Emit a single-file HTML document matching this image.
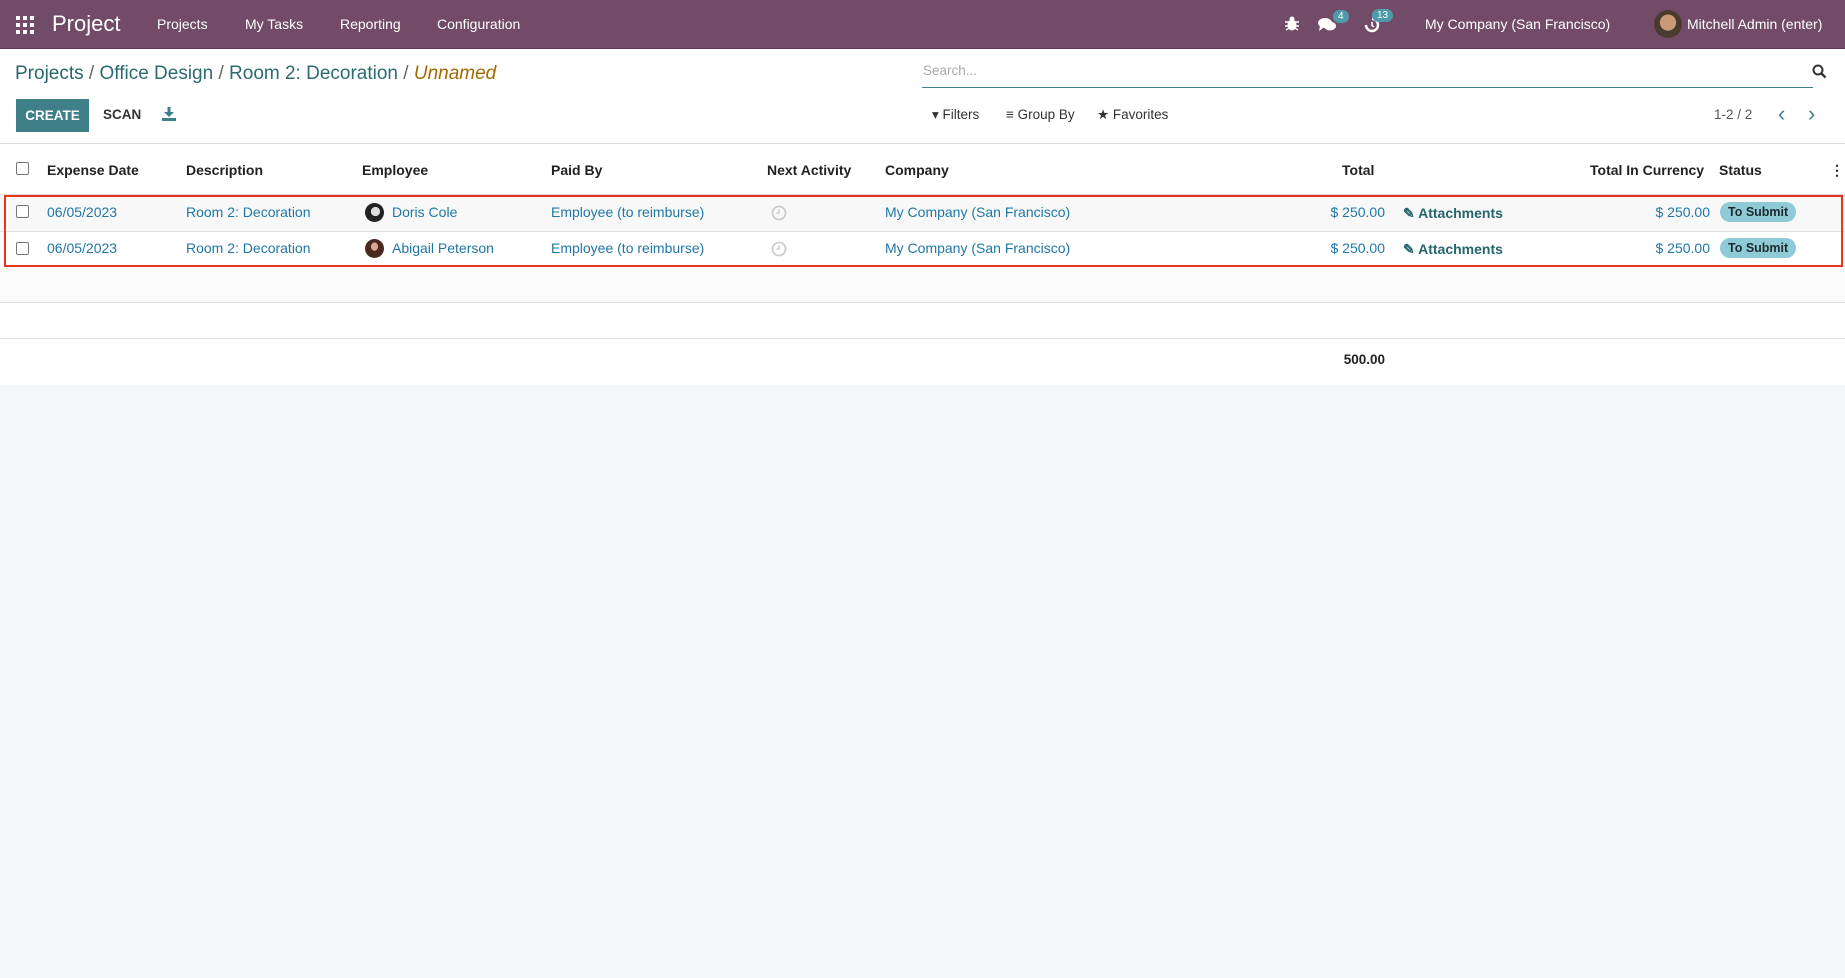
<!DOCTYPE html>
<html><head><meta charset="utf-8">
<style>
*{box-sizing:border-box;margin:0;padding:0}
body{width:1845px;height:978px;background:#f5f6fa;font-family:"Liberation Sans",Arial,sans-serif;font-size:14px;color:#4c4c4c;position:relative;overflow:hidden}
.a{position:absolute;white-space:nowrap}
.nav{position:absolute;left:0;top:0;width:1845px;height:49px;background:#714b67;border-bottom:1px solid #5a3b52}
.nav .a{color:#fff;top:16px;font-size:14px}
.main{position:absolute;left:0;top:49px;width:1845px;height:336px;background:#fff}
.lnk{color:#1f77a6}
.th{font-weight:bold;color:#222;top:162px;font-size:14px}
.cb{position:absolute;width:13px;height:13px;border:1px solid #777;border-radius:2px;background:#fff}
.badge{position:absolute;background:#4f9aa8;color:#fff;font-size:10px;border-radius:9px;padding:1px 5px}
.st{position:absolute;background:#8fcbd6;color:#1d2b2e;font-weight:bold;font-size:12.5px;border-radius:10px;padding:3px 8px}
</style></head><body>
<div class="nav">
 <svg class="a" style="left:16px;top:16px" width="18" height="18" viewBox="0 0 18 18" fill="#fff"><rect x="0" y="0" width="4" height="4"/><rect x="7" y="0" width="4" height="4"/><rect x="14" y="0" width="4" height="4"/><rect x="0" y="7" width="4" height="4"/><rect x="7" y="7" width="4" height="4"/><rect x="14" y="7" width="4" height="4"/><rect x="0" y="14" width="4" height="4"/><rect x="7" y="14" width="4" height="4"/><rect x="14" y="14" width="4" height="4"/></svg>
 <div class="a" style="left:52px;top:11px;font-size:22px">Project</div>
 <div class="a" style="left:157px">Projects</div>
 <div class="a" style="left:245px">My Tasks</div>
 <div class="a" style="left:340px">Reporting</div>
 <div class="a" style="left:437px">Configuration</div>
 <svg class="a" style="left:1285px;top:16px" width="14" height="15" viewBox="0 0 14 15" fill="#fff"><ellipse cx="7" cy="9" rx="4.5" ry="5.5"/><circle cx="7" cy="3" r="2.5"/><path d="M0 6h14M0 10h14M1 14l3-2M13 14l-3-2" stroke="#fff" stroke-width="1.4"/></svg>
 <svg class="a" style="left:1318px;top:17px" width="18" height="15" viewBox="0 0 18 15" fill="#fff"><ellipse cx="7" cy="6" rx="7" ry="5"/><ellipse cx="12" cy="9" rx="6" ry="4.5"/><path d="M2 9l-1 5 4-3z"/></svg>
 <div class="badge" style="left:1333px;top:10px">4</div>
 <svg class="a" style="left:1364px;top:17px" width="16" height="16" viewBox="0 0 16 16"><path d="M8 2a6 6 0 1 1-6 6" fill="none" stroke="#fff" stroke-width="2.4"/><path d="M8 5v3.5l2 1.5" fill="none" stroke="#fff" stroke-width="1.6"/></svg>
 <div class="badge" style="left:1372px;top:9px">13</div>
 <div class="a" style="left:1425px">My Company (San Francisco)</div>
 <div class="a" style="left:1654px;top:10px;width:28px;height:28px;border-radius:50%;background:radial-gradient(circle at 50% 45%,#c99a78 0 38%,#4b3a2e 40%)"></div>
 <div class="a" style="left:1687px">Mitchell Admin (enter)</div>
</div>
<div class="main">
 <div class="a" style="left:15px;top:14px;font-size:19px;color:#2d6b72"><span style="color:#28676e">Projects</span> <span style="color:#666">/</span> Office Design <span style="color:#666">/</span> Room 2: Decoration <span style="color:#666">/</span> <i style="color:#a36a00">Unnamed</i></div>
 <div class="a" style="left:16px;top:50px;width:73px;height:33px;background:#3f7f87;color:#fff;font-weight:bold;font-size:13.5px;text-align:center;line-height:33px">CREATE</div>
 <div class="a" style="left:103px;top:58px;font-weight:bold;font-size:13.5px;color:#333">SCAN</div>
 <svg class="a" style="left:162px;top:58px" width="14" height="14" viewBox="0 0 14 14" fill="#3f7f87"><rect x="5.5" y="0" width="3" height="6"/><path d="M2 5h10l-5 5z"/><rect x="0" y="11" width="14" height="3"/></svg>
 <div class="a" style="left:923px;top:14px;color:#aaa;font-size:13.5px">Search...</div>
 <svg class="a" style="left:1812px;top:15px" width="15" height="15" viewBox="0 0 15 15"><circle cx="6" cy="6" r="4.5" fill="none" stroke="#333" stroke-width="2"/><path d="M9.5 9.5l4 4" stroke="#333" stroke-width="2.4"/></svg>
 <div class="a" style="left:922px;top:38px;width:891px;height:1px;background:#3f7f87"></div>
 <div class="a" style="left:932px;top:58px;font-size:13.5px;color:#333">▾ Filters</div>
 <div class="a" style="left:1006px;top:58px;font-size:13.5px;color:#333">≡ Group By</div>
 <div class="a" style="left:1097px;top:58px;font-size:13.5px;color:#333">★ Favorites</div>
 <div class="a" style="left:1714px;top:58px;font-size:13.5px;color:#555">1-2 / 2</div>
 <div class="a" style="left:1778px;top:52px;font-size:22px;color:#3f7f87">‹</div>
 <div class="a" style="left:1808px;top:52px;font-size:22px;color:#3f7f87">›</div>
 <div class="a" style="left:0;top:94px;width:1845px;height:1px;background:#ddd"></div>
</div>
<div class="a" style="left:0;top:194px;width:1845px;height:1px;background:#ddd"></div>
<div class="a" style="left:0;top:196px;width:1845px;height:35px;background:#f8f8f8"></div>
<div class="a" style="left:0;top:231px;width:1845px;height:1px;background:#e4e4e4"></div>
<div class="a" style="left:0;top:267px;width:1845px;height:35px;background:#fafafa"></div>
<div class="a" style="left:0;top:302px;width:1845px;height:1px;background:#ddd"></div>
<div class="a" style="left:0;top:338px;width:1845px;height:1px;background:#ddd"></div>

<div class="cb" style="left:16px;top:162px"></div>
<div class="a th" style="left:47px">Expense Date</div>
<div class="a th" style="left:186px">Description</div>
<div class="a th" style="left:362px">Employee</div>
<div class="a th" style="left:551px">Paid By</div>
<div class="a th" style="left:767px">Next Activity</div>
<div class="a th" style="left:885px">Company</div>
<div class="a th" style="left:1342px">Total</div>
<div class="a th" style="left:1590px">Total In Currency</div>
<div class="a th" style="left:1719px">Status</div>
<div class="a th" style="left:1830px">⋮</div>

<div class="cb" style="left:16px;top:205px"></div>
<div class="a lnk" style="left:47px;top:204px">06/05/2023</div>
<div class="a lnk" style="left:186px;top:204px">Room 2: Decoration</div>
<div class="a" style="left:365px;top:203px;width:19px;height:19px;border-radius:50%;background:radial-gradient(circle at 55% 45%,#ddd 0 30%,#222 32%)"></div>
<div class="a lnk" style="left:392px;top:204px">Doris Cole</div>
<div class="a lnk" style="left:551px;top:204px">Employee (to reimburse)</div>
<svg class="a" style="left:771px;top:205px" width="16" height="16" viewBox="0 0 16 16"><circle cx="8" cy="8" r="6.5" fill="none" stroke="#ccc" stroke-width="1.8"/><path d="M8 4.5V8H5.5" fill="none" stroke="#ccc" stroke-width="1.5"/></svg>
<div class="a lnk" style="left:885px;top:204px">My Company (San Francisco)</div>
<div class="a lnk" style="left:1300px;top:204px;width:85px;text-align:right">$ 250.00</div>
<div class="a" style="left:1403px;top:205px;color:#26656c;font-weight:bold;font-size:14px">✎ Attachments</div>
<div class="a lnk" style="left:1600px;top:204px;width:110px;text-align:right">$ 250.00</div>
<div class="st" style="left:1720px;top:202px">To Submit</div>

<div class="cb" style="left:16px;top:242px"></div>
<div class="a lnk" style="left:47px;top:240px">06/05/2023</div>
<div class="a lnk" style="left:186px;top:240px">Room 2: Decoration</div>
<div class="a" style="left:365px;top:239px;width:19px;height:19px;border-radius:50%;background:radial-gradient(ellipse at 50% 40%,#d9a890 0 25%,#4a2a20 27%)"></div>
<div class="a lnk" style="left:392px;top:240px">Abigail Peterson</div>
<div class="a lnk" style="left:551px;top:240px">Employee (to reimburse)</div>
<svg class="a" style="left:771px;top:241px" width="16" height="16" viewBox="0 0 16 16"><circle cx="8" cy="8" r="6.5" fill="none" stroke="#ccc" stroke-width="1.8"/><path d="M8 4.5V8H5.5" fill="none" stroke="#ccc" stroke-width="1.5"/></svg>
<div class="a lnk" style="left:885px;top:240px">My Company (San Francisco)</div>
<div class="a lnk" style="left:1300px;top:240px;width:85px;text-align:right">$ 250.00</div>
<div class="a" style="left:1403px;top:241px;color:#26656c;font-weight:bold;font-size:14px">✎ Attachments</div>
<div class="a lnk" style="left:1600px;top:240px;width:110px;text-align:right">$ 250.00</div>
<div class="st" style="left:1720px;top:238px">To Submit</div>

<div class="a" style="left:4px;top:195px;width:1839px;height:72px;border:2px solid #e8341c"></div>
<div class="a" style="left:1300px;top:352px;width:85px;text-align:right;font-weight:bold;color:#222;font-size:13.5px">500.00</div>
</body></html>
